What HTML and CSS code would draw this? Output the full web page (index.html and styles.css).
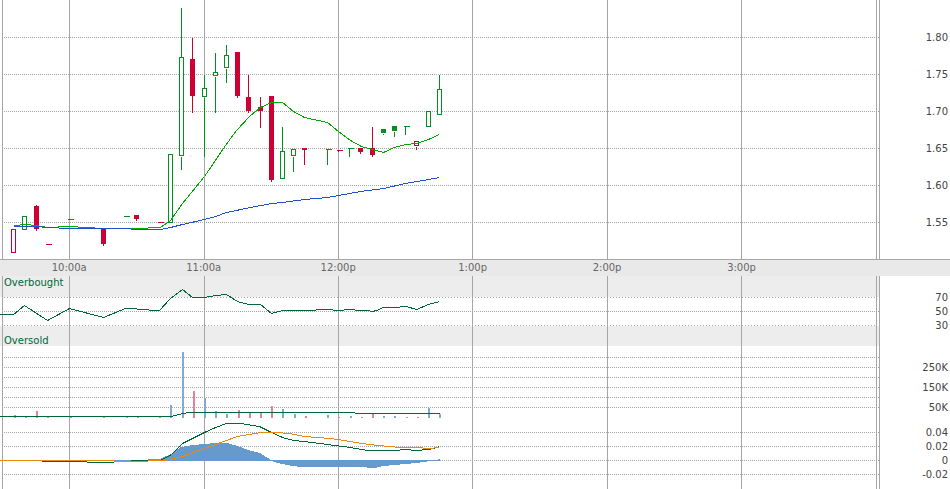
FILE: index.html
```
<!DOCTYPE html>
<html lang="en">
<head>
<meta charset="utf-8">
<title>Intraday chart</title>
<link rel="stylesheet" href="styles.css">
</head>
<body>
<main class="chart">
  <section class="panel" aria-label="Price">
    <svg class="plot price" viewBox="0 0 880 259" preserveAspectRatio="none">
      <path class="grid" transform="translate(0 .5)" d="M4 37H880M4 74H880M4 111H880M4 148H880M4 185H880M4 222H880"/>
      <g transform="translate(.5 .5)">
        <path class="rule" d="M2 -1V260M69 -1V260M204 -1V260M338 -1V260M472 -1V260M607 -1V260M741 -1V260M876 -1V260M879 -1V260"/>
        <path class="up" d="M24 215V216M67 219H73M123 216H129M181 7V57M181 156V169M204 74V88M204 97V156M215 52V72M215 76V112M226 44V55M226 68V82M282 126V151M293 148V149M293 156V171M325 149H331M327 148V164M347 148H353M349 148V156M383 133V134M394 131V136M403 126H409M405 126V134M439 74V89"/>
        <path class="up hollow" d="M22 216h4v13h-4zM168 154h4v68h-4zM179 57h4v98h-4zM202 88h4v8h-4zM213 72h4v3h-4zM224 55h4v12h-4zM280 151h4v27h-4zM291 149h4v6h-4zM426 111h4v15h-4zM437 89h4v25h-4z"/>
        <path class="down" d="M36 204V230M45 244H51M103 229V245M136 215V220M157 222H163M192 37V112M237 52V97M248 74V112M260 96V127M271 96V181M304 148V164M336 150H342M338 149V151M360 148V153M372 126V156M416 146V149"/>
        <path class="down hollow" d="M11 229h4v23h-4zM414 141h4v4h-4z"/>
      </g>
      <path class="up-body" d="M381 129h5v4h-5zM392 126h5v5h-5z"/>
      <path class="down-body" d="M34 206h5v23h-5zM101 229h5v15h-5zM134 215h5v4h-5zM190 59h5v37h-5zM235 52h5v44h-5zM246 97h5v14h-5zM258 107h5v4h-5zM269 96h5v84h-5zM302 148h5v2h-5zM358 148h5v4h-5zM370 148h5v7h-5z"/>
      <g transform="translate(.5 .5)">
        <polyline class="fast" points="13,225 19,225 20,224 30,224 31,225 38,225 39,226 44,226 45,227 57,227 58,226 77,226 78,227 94,227 95,228 130,228 147,228 148,227 160,227 170,220 175,213 182,203 204,176 225,145 236,130 250,115 260,107 271,102 282,102 293,111 304,117 327,122 338,131 350,140 361,146 372,149 383,152 394,147 405,144 416,143 428,139 439,134"/>
        <polyline class="slow" points="13,226 41,226 42,227 58,227 59,228 130,228 131,229 160,229 170,227 182,224 204,219 215,216 226,212 250,207 271,203 282,202 304,199 327,197 338,195 360,191 383,188 405,183 428,179 439,177"/>
      </g>
    </svg>
    <ul class="scale scale-price"><li>1.80</li><li>1.75</li><li>1.70</li><li>1.65</li><li>1.60</li><li>1.55</li></ul>
  </section>

  <div class="times">
    <ol><li>10:00a</li><li>11:00a</li><li>12:00p</li><li>1:00p</li><li>2:00p</li><li>3:00p</li></ol>
  </div>

  <section class="panel" aria-label="Relative strength">
    <svg class="plot rsi" viewBox="0 276 880 70" preserveAspectRatio="none">
      <path class="band" d="M0 276h879v21H0zM0 326h879v20H0z"/>
      <path class="grid" transform="translate(0 .5)" d="M4 311H880"/>
      <path class="grid threshold" transform="translate(0 .5)" d="M4 297H876M4 325H876"/>
      <g transform="translate(.5 .5)">
        <path class="rule" d="M2 275V347M69 275V347M204 275V347M338 275V347M472 275V347M607 275V347M741 275V347M876 275V347M879 275V347"/>
        <polyline class="study" points="-1,314 13,314 24,305 47,320 69,308 103,317 125,308 136,308 137,309 148,309 149,310 159,310 170,298 182,289 192,297 204,297 215,295 226,294 237,301 248,304 260,304 271,313 282,310 315,310 316,309 332,309 333,310 343,310 344,309 354,309 355,310 366,310 372,311 376,310 383,307 399,307 400,306 406,306 416,309 428,304 439,301"/>
      </g>
    </svg>
    <span class="note note-top">Overbought</span>
    <span class="note note-bottom">Oversold</span>
    <ul class="scale scale-rsi"><li>70</li><li>50</li><li>30</li></ul>
  </section>

  <section class="panel" aria-label="Volume">
    <svg class="plot volume" viewBox="0 346 880 72" preserveAspectRatio="none">
      <path class="grid" transform="translate(0 .5)" d="M4 357H880M4 367H880M4 377H880M4 387H880M4 397H880M4 407H880"/>
      <g transform="translate(.5 .5)">
        <path class="rule" d="M2 345V419M69 345V419M204 345V419M338 345V419M472 345V419M607 345V419M741 345V419M876 345V419M879 345V419"/>
      </g>
      <path class="vol-up" d="M25 417h2v1h-2zM70 417h2v1h-2zM126 417h2v1h-2zM170 405h2v13h-2zM182 352h2v66h-2zM204 398h2v20h-2zM215 411h2v7h-2zM226 414h2v4h-2zM282 409h2v9h-2zM294 414h2v4h-2zM327 415h2v3h-2zM350 416h2v2h-2zM383 416h2v2h-2zM394 416h2v2h-2zM406 417h2v1h-2zM428 408h2v10h-2zM439 414h2v4h-2z"/>
      <path class="vol-down" d="M14 415h2v3h-2zM36 411h2v7h-2zM47 417h2v1h-2zM103 417h2v1h-2zM137 417h2v1h-2zM159 417h2v1h-2zM193 391h2v27h-2zM238 410h2v8h-2zM249 413h2v5h-2zM260 413h2v5h-2zM271 406h2v12h-2zM305 416h2v2h-2zM338 417h2v1h-2zM361 417h2v1h-2zM372 413h2v5h-2zM417 417h2v1h-2z"/>
      <g transform="translate(.5 .5)">
        <polyline class="study" points="-1,416 171,416 182,413 190,412 354,412 355,413 439,413"/>
      </g>
    </svg>
    <ul class="scale scale-volume"><li>250K</li><li>150K</li><li>50K</li></ul>
  </section>

  <section class="panel" aria-label="MACD">
    <svg class="plot macd" viewBox="0 418 880 71" preserveAspectRatio="none">
      <path class="grid" transform="translate(0 .5)" d="M4 432H880M4 446H880M4 460H880M4 474H880"/>
      <g transform="translate(.5 .5)">
        <path class="rule" d="M2 417V490M69 417V490M204 417V490M338 417V490M472 417V490M607 417V490M741 417V490M876 417V490M879 417V490"/>
      </g>
      <path class="histogram" d="M87 460H148V459H160L171 454L181 447L193 445L204 444L215 443H227L238 446L248 450L260 453L271 460H438V459H440V461H431L416 463L405 464L394 465L383 466L375 468H367V467H300L293 466L282 464L271 461H87z"/>
      <g transform="translate(.5 .5)">
        <polyline class="study" points="-1,460 41,460 42,461 86,461 87,462 113,462 114,461 130,461 131,460 160,460 171,454 182,443 204,432 215,427 226,423 240,423 259,426 271,432 282,437 293,440 304,441 327,444 350,447 367,450 399,450 400,449 410,449 411,450 421,450 422,449 429,449 439,446"/>
        <polyline class="signal" points="-1,460 86,460 113,460 114,461 147,461 148,460 164,460 182,456 204,448 226,440 237,436 260,432 275,432 289,433 304,436 330,438 350,441 361,443 378,445 389,446 400,447 422,447 423,448 433,448 434,447 438,447"/>
      </g>
    </svg>
    <ul class="scale scale-macd"><li>0.04</li><li>0.02</li><li>0</li><li>-0.02</li></ul>
  </section>
</main>
</body>
</html>
```
FILE: styles.css
```
body {
  margin: 0;
  background: #fff;
  color: #444;
  font: 10px/14px "DejaVu Sans", sans-serif;
}

ul, ol {
  margin: 0;
  padding: 0;
  list-style: none;
}

.chart {
  display: flex;
  flex-direction: column;
}

.panel {
  position: relative;
  display: grid;
  grid-template-columns: 1fr 70px;
}

.plot {
  display: block;
  width: 100%;
  shape-rendering: crispEdges;
}

.price { height: 259px; }
.rsi { height: 70px; }
.volume { height: 72px; }
.macd { height: 71px; }

.plot path, .plot polyline { stroke-width: 1px; }
.grid { stroke: #a6a6a6; stroke-dasharray: 1 1; }
.threshold { stroke-dasharray: 1 2; }
.rule { stroke: #a6a6a6; }
.band { fill: #ededed; }

.up { stroke: #00921f; }
.down { stroke: #cc0033; }
.hollow { fill: #fff; }
.up-body { fill: #00921f; }
.down-body { fill: #cc0033; }

.fast, .slow, .study, .signal { fill: none; }
.fast { stroke: #00aa00; }
.slow { stroke: #2050cc; }
.study { stroke: #006838; }
.signal { stroke: #e88a10; }

.vol-up { fill: #80aad4; }
.vol-down { fill: #e67f99; }
.histogram { fill: #6699cc; }

.scale {
  padding-right: 2px;
  text-align: right;
}

.scale-price { padding-top: 19px; }
.scale-price li { line-height: 37px; }
.scale-rsi { padding-top: 15px; }
.scale-volume { padding-top: 12px; }
.scale-volume li { line-height: 20px; }
.scale-macd { padding-top: 8px; }

.times {
  border-top: 1px solid #a6a6a6;
  padding: 0 74px 0 2px;
  background: #e9e9e9;
  color: #666;
}

.times ol {
  display: grid;
  grid-template-columns: repeat(6, 2fr) 1fr;
  text-align: center;
  line-height: 16px;
}

.note {
  position: absolute;
  left: 4px;
  color: #006838;
}

.note-top { top: 0; }
.note-bottom { bottom: -2px; }
```
